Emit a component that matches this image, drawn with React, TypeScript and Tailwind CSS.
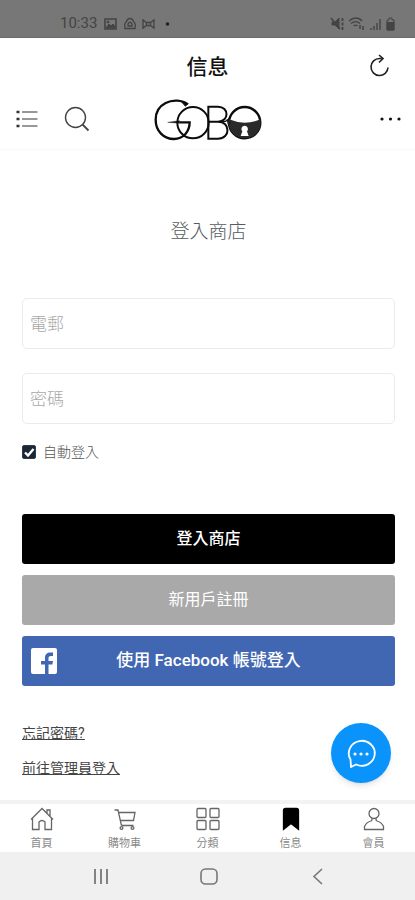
import type { ReactNode } from "react";

const StatusBar = () => (
  <div className="flex h-[38px] shrink-0 items-end justify-between border-b border-[#6a6a6a] bg-[#777777] pr-[19px] pb-1 pl-[60px] text-[#444444]">
    <div className="flex items-center">
      <span className="w-11 text-[15px] leading-5">10:33</span>
      <svg viewBox="0 0 70 16" className="h-4 w-[70px]" fill="none" stroke="currentColor">
        <path d="M1 4h11v10H1z" strokeWidth="1.6" />
        <path d="M2 13l3-4 2 2 2-2 3 4z" fill="currentColor" />
        <circle cx="4" cy="7" r="1" fill="currentColor" />
        <path d="M26 3.500c2 0 3 1.200 3.400 3 2 1.500 2.300 4 1.600 7H21c-.7-3-.4-5.500 1.600-7 .4-1.800 1.400-3 3.400-3z" strokeWidth="1.300" />
        <path d="M24 11V9q2-3.500 4 0v2z" strokeWidth="1.300" />
        <path d="M39 4v10M50 4v10M39 5l3.500 2.500h4L50 5M39 13l3.500-2.500h4L50 13M42.500 7v4M46.500 7v4" strokeWidth="1.300" />
        <circle cx="63.500" cy="9" r="1.800" fill="#222222" stroke="none" />
      </svg>
    </div>
    <svg viewBox="0 0 66 18" className="h-[18px] w-[66px]" fill="none" stroke="currentColor">
      <path d="M2 7h3l4-4v11l-4-4H2z" fill="currentColor" />
      <path d="M1 3l9 11" strokeWidth="1.500" />
      <path d="M12.500 3v12" strokeWidth="1.800" strokeDasharray="3 1.500" />
      <path d="M19 6c4-4 10-4 13 0M21 8.500c3-2.500 6-2.500 9 0M23.500 11c1.500-1 3-1 4 0" strokeWidth="1.300" />
      <path d="M30 10v4M33 11v4" strokeWidth="1.500" />
      <path d="M41 15v-2M44 15v-4M47 15V8M50 15V4" strokeWidth="1.400" />
      <path d="M57 5h2V3h3v2h2v10h-7z" />
      <path d="M57 7.500h7v7.500h-7z" fill="currentColor" />
    </svg>
  </div>
);

const Logo = () => (
  <svg viewBox="0 0 375 180" className="h-[60px] w-[125px]" fill="none" stroke="#0c0c0c" strokeWidth="6" role="img" aria-label="GOBO">
    <path d="M128 43C112 30 83 28 62 39 42 49 32 68 32 89c0 34 24 58 55 58 27 0 47-21 47-50H104" strokeWidth="7" />
    <path d="M108 34l22 7-9 8z" fill="#0c0c0c" strokeWidth="2" />
    <path d="M68 97l36-5v8z" fill="#0c0c0c" strokeWidth="1" />
    <circle cx="144" cy="98" r="47" />
    <path d="M190 50h29c34 0 34 45 0 45h-29zM190 95h29c38 0 38 51 0 51h-29z" />
    <path d="M219 95h16q12 0 20-14" strokeWidth="4" />
    <circle cx="299" cy="98" r="47" strokeWidth="7" />
    <path d="M252 88q47 20 94 0c6 30-15 57-47 57s-53-27-47-57z" fill="#2a2a2a" stroke="none" />
    <path d="M246 88l10 12-6 5z" fill="#2a2a2a" strokeWidth="2" />
    <path d="M299 107a10 10 0 0 1 7 17l5 14h-24l5-14a10 10 0 0 1 7-17z" fill="#ffffff" stroke="none" />
  </svg>
);

const tabs: { label: string; icon: ReactNode }[] = [
  {
    label: "首頁",
    icon: <path d="M2 13.500L13 2.500l11 11M18 7V4h3v6M3.500 12.500V23.500h6.500v-7.500q3-3 6 0v7.500h6.500V12.500" />,
  },
  {
    label: "購物車",
    icon: (
      <>
        <path d="M2.500 4h3.500L9 17.500q0 2 2 2h10.500M6.500 6.500h16.500L21.500 14.500H8.500" />
        <circle cx="9.500" cy="22" r="1.400" />
        <circle cx="20.500" cy="22" r="1.400" />
      </>
    ),
  },
  {
    label: "分類",
    icon: (
      <>
        <rect x="2" y="2.500" width="9" height="9" rx="1" />
        <rect x="15" y="2.500" width="9" height="9" rx="1" />
        <rect x="2" y="14.500" width="9" height="9" rx="1" />
        <rect x="15" y="14.500" width="9" height="9" rx="1" />
      </>
    ),
  },
  {
    label: "信息",
    icon: <path d="M5.500 4.500q0-2 2-2h11q2 0 2 2V23.500L13 17.500l-7.500 6z" fill="#000000" stroke="#000000" />,
  },
  {
    label: "會員",
    icon: (
      <>
        <circle cx="13" cy="7.500" r="5" />
        <path d="M11 12v1.500q0 1-1 1.500-5 1.500-6.500 5.500v3h19v-3q-1.500-4-6.500-5.500-1-.5-1-1.500V12" />
      </>
    ),
  },
];

const TabBar = () => (
  <nav className="flex h-[52px] shrink-0 border-t-4 border-[#f3f3f3] bg-white">
    {tabs.map((tab) => (
      <button
        key={tab.label}
        type="button"
        className="flex flex-1 flex-col items-center justify-center gap-1.5 text-[11px] leading-3 text-[#8a8a8a]"
      >
        <svg viewBox="0 0 26 26" className="size-[26px]" fill="none" stroke="#666666" strokeWidth="1.300">
          {tab.icon}
        </svg>
        {tab.label}
      </button>
    ))}
  </nav>
);

const SystemNav = () => (
  <div className="flex h-12 shrink-0 items-center justify-center gap-[86px] bg-[#f0f0f0] text-[#777777]">
    <button type="button" aria-label="Recent apps">
      <svg viewBox="0 0 22 22" className="size-[22px]" stroke="currentColor" strokeWidth="1.800">
        <path d="M6 4v15M12 4v15M18 4v15" />
      </svg>
    </button>
    <button type="button" aria-label="Home">
      <svg viewBox="0 0 22 22" className="size-[22px]" fill="none" stroke="currentColor" strokeWidth="1.600">
        <rect x="4" y="4" width="16" height="15" rx="4.500" />
      </svg>
    </button>
    <button type="button" aria-label="Back">
      <svg viewBox="0 0 22 22" className="size-[22px]" fill="none" stroke="currentColor" strokeWidth="1.600">
        <path d="M17 4l-8 7.500 8 7.500" />
      </svg>
    </button>
  </div>
);

const inputClass =
  "h-[51px] w-full rounded-[5px] border border-[#ebebeb] bg-white px-[7px] text-[17px] font-light outline-none placeholder:text-[#a8a8a8]";

export default function App() {
  return (
    <div className="flex min-h-screen flex-col bg-white font-['Roboto','Noto_Sans_CJK_TC',sans-serif]">
      <StatusBar />

      <header>
        <div className="grid h-[52px] grid-cols-3 items-center px-[22px] pt-1.5">
          <h1 className="col-start-2 text-center text-[21px] leading-7 font-medium text-[#111111]">
            信息
          </h1>
          <button type="button" aria-label="Reload" className="justify-self-end">
            <svg viewBox="0 0 26 26" className="size-[26px]" fill="none" stroke="#222222" strokeWidth="1.600">
              <path d="M14.500 4.500H12.500a8.500 8.500 0 1 0 8.500 9M12 1l4 3.500-4 4" />
            </svg>
          </button>
        </div>
        <div className="grid h-[60px] grid-cols-[1fr_auto_1fr] items-center border-b border-[#f9f9f9] px-3">
          <div className="flex items-center gap-6">
            <button type="button" aria-label="Menu">
              <svg viewBox="0 0 28 28" className="size-7" stroke="#777777" strokeWidth="1.600">
                <path d="M10 6h15.500M10 13h15.500M10 20h15.500" />
                <path d="M4.500 6h3M4.500 13h3M4.500 20h3" stroke="#333333" strokeWidth="2.400" />
              </svg>
            </button>
            <button type="button" aria-label="Search">
              <svg viewBox="0 0 28 28" className="size-7" fill="none" stroke="#444444" strokeWidth="1.400">
                <circle cx="11.500" cy="11.500" r="10" />
                <path d="M18.500 18.500l6 6" strokeWidth="1.800" />
              </svg>
            </button>
          </div>
          <Logo />
          <button type="button" aria-label="More" className="justify-self-end">
            <svg viewBox="0 0 26 26" className="size-[26px]" fill="#111111">
              <circle cx="5" cy="12" r="1.600" />
              <circle cx="13.500" cy="12" r="1.600" />
              <circle cx="22" cy="12" r="1.600" />
            </svg>
          </button>
        </div>
      </header>

      <main className="flex-1 pt-[68px] pr-5 pl-[22px]">
        <h2 className="text-center text-[19px] leading-7 font-light text-[#555b60]">登入商店</h2>

        <form className="pt-[52px]" onSubmit={(e) => e.preventDefault()}>
          <div className="flex flex-col gap-6">
            <input type="email" aria-label="電郵" placeholder="電郵" className={inputClass} />
            <input type="password" aria-label="密碼" placeholder="密碼" className={inputClass} />
          </div>

          <label className="flex items-center gap-[7px] pt-4 text-sm leading-6 font-light text-[#555555]">
            <span className="grid size-3.5 place-items-center">
              <input
                type="checkbox"
                defaultChecked
                className="peer col-start-1 row-start-1 size-3.5 appearance-none rounded-[2px] border border-[#303a4a] checked:bg-[#1c2635]"
              />
              <svg
                viewBox="0 0 14 14"
                className="pointer-events-none invisible col-start-1 row-start-1 size-3.5 peer-checked:visible"
                fill="none"
                stroke="#ffffff"
                strokeWidth="2.400"
              >
                <path d="M3 7.500l3 3 5.500-6.500" />
              </svg>
            </span>
            自動登入
          </label>

          <div className="flex flex-col gap-[11px] pt-[50px] text-white">
            <button type="submit" className="h-[50px] rounded-[3px] bg-black text-base font-medium">
              登入商店
            </button>
            <button type="button" className="h-[50px] rounded-[3px] bg-[#a9a9a9] text-base">
              新用戶註冊
            </button>
            <button
              type="button"
              className="grid h-[50px] grid-cols-[26px_1fr_26px] items-center rounded-[3px] bg-[#4267b2] px-[9px] text-[17px] font-medium"
            >
              <svg viewBox="0 0 26 26" className="size-[26px]">
                <rect width="26" height="26" rx="2" fill="#ffffff" />
                <path
                  d="M14 26V16.500h-4V13h4v-3c0-3.600 2-5.500 5.500-5.500h2.500V8h-2c-1.700 0-2.500.8-2.500 2.300V13h4.500l-.6 3.500h-3.900V26z"
                  fill="#4267b2"
                />
              </svg>
              使用 Facebook 帳號登入
            </button>
          </div>
        </form>

        <div className="flex flex-col items-start gap-[11px] pt-[35px] text-sm leading-6 text-[#444444] underline">
          <a href="#forgot">忘記密碼?</a>
          <a href="#admin">前往管理員登入</a>
        </div>
      </main>

      <button
        type="button"
        aria-label="Chat"
        className="fixed right-6 bottom-[117px] grid size-[60px] place-items-center rounded-full bg-[#0a94fb] shadow-md"
      >
        <svg viewBox="0 0 32 32" className="size-8" fill="none" stroke="#ffffff" strokeWidth="1.800">
          <path d="M5.500 22.500A13 12.500 0 1 1 11 27.500L6 30z" strokeLinejoin="round" />
          <g fill="#ffffff" stroke="none">
            <circle cx="10" cy="17" r="1.600" />
            <circle cx="16" cy="17" r="1.600" />
            <circle cx="22" cy="17" r="1.600" />
          </g>
        </svg>
      </button>

      <TabBar />
      <SystemNav />
    </div>
  );
}
